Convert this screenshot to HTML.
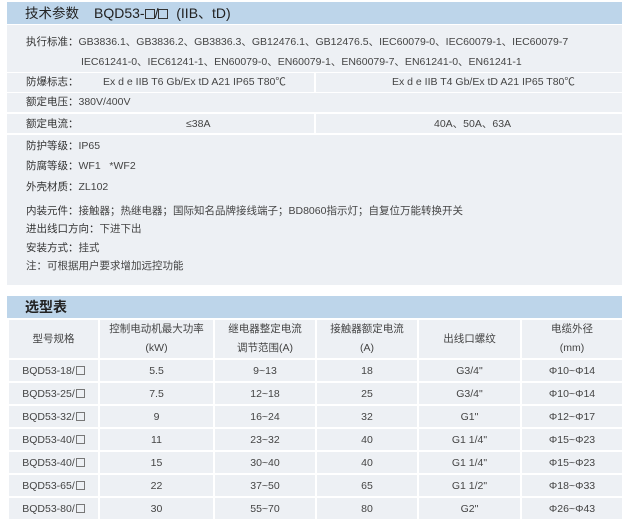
<!DOCTYPE html>
<html><head><meta charset="utf-8"><style>
*{margin:0;padding:0;box-sizing:border-box}
body{width:635px;height:523px;background:#fff;font-family:"Liberation Sans","Noto Sans CJK SC",sans-serif;color:#444;font-size:10.5px;position:relative;overflow:hidden}
.a{position:absolute}
.hd{background:#bdd5ea;left:7px;width:615px;color:#222;font-size:14px}
.g{background:#edf0f4;left:7px;width:615px}
.t{position:absolute;white-space:nowrap;line-height:14px}
.lb{color:#333}
.bx{display:inline-block;width:9px;height:9px;border:1px solid #777;vertical-align:-1px;margin-left:1px}
.hbx{display:inline-block;width:10px;height:10px;border:1px solid #333;vertical-align:-1px}
table{position:absolute;left:7px;top:318px;width:615px;border-collapse:collapse;table-layout:fixed}
td{background:#edf0f4;border:2px solid #fff;text-align:center;height:23px;padding:0;line-height:14px}
tr:first-child td{height:39px;line-height:19px}
</style></head><body>
<div class="a hd" style="top:2px;height:22px"><span class="t" style="left:18px;top:4px;line-height:15px;font-size:13.5px">技术参数</span><span class="t" style="left:87px;top:4px;line-height:15px">BQD53-<span class="hbx"></span>/<span class="hbx"></span>&nbsp;&nbsp;(IIB、tD)</span></div>
<div class="a g" style="top:25px;height:47px"></div>
<div class="a g" style="top:73px;height:19px;width:307px"></div>
<div class="a g" style="top:73px;height:19px;left:316px;width:306px"></div>
<div class="a g" style="top:93px;height:19px"></div>
<div class="a g" style="top:114px;height:19px;width:307px"></div>
<div class="a g" style="top:114px;height:19px;left:316px;width:306px"></div>
<div class="a g" style="top:135px;height:150px"></div>
<span class="t" style="left:26px;top:35px"><span class="lb">执行标准：</span>GB3836.1、GB3836.2、GB3836.3、GB12476.1、GB12476.5、IEC60079-0、IEC60079-1、IEC60079-7</span>
<span class="t" style="left:81px;top:55px">IEC61241-0、IEC61241-1、EN60079-0、EN60079-1、EN60079-7、EN61241-0、EN61241-1</span>
<span class="t lb" style="left:26px;top:75px">防爆标志：</span>
<span class="t" style="left:103px;top:75px">Ex d e IIB T6 Gb/Ex tD A21 IP65 T80℃</span>
<span class="t" style="left:392px;top:75px">Ex d e IIB T4 Gb/Ex tD A21 IP65 T80℃</span>
<span class="t" style="left:26px;top:95px"><span class="lb">额定电压：</span>380V/400V</span>
<span class="t lb" style="left:26px;top:117px">额定电流：</span>
<span class="t" style="left:186px;top:117px">≤38A</span>
<span class="t" style="left:434px;top:117px">40A、50A、63A</span>
<span class="t" style="left:26px;top:139px"><span class="lb">防护等级：</span>IP65</span>
<span class="t" style="left:26px;top:159px"><span class="lb">防腐等级：</span>WF1&nbsp;&nbsp;&nbsp;*WF2</span>
<span class="t" style="left:26px;top:180px"><span class="lb">外壳材质：</span>ZL102</span>
<span class="t" style="left:26px;top:204px"><span class="lb">内装元件：</span>接触器；热继电器；国际知名品牌接线端子；BD8060指示灯；自复位万能转换开关</span>
<span class="t" style="left:26px;top:222px"><span class="lb">进出线口方向：</span>下进下出</span>
<span class="t" style="left:26px;top:241px"><span class="lb">安装方式：</span>挂式</span>
<span class="t" style="left:26px;top:259px">注：可根据用户要求增加远控功能</span>
<div class="a hd" style="top:296px;height:22px"><span class="t" style="left:18px;top:4px;line-height:15px;font-weight:bold">选型表</span></div>
<table>
<colgroup><col style="width:91px"><col style="width:115px"><col style="width:102px"><col style="width:102px"><col style="width:103px"><col style="width:102px"></colgroup>
<tr><td>型号规格</td><td>控制电动机最大功率<br>(kW)</td><td>继电器整定电流<br>调节范围(A)</td><td>接触器额定电流<br>(A)</td><td>出线口螺纹</td><td>电缆外径<br>(mm)</td></tr>
<tr><td>BQD53-18/<span class="bx"></span></td><td>5.5</td><td>9~13</td><td>18</td><td>G3/4"</td><td>Φ10~Φ14</td></tr>
<tr><td>BQD53-25/<span class="bx"></span></td><td>7.5</td><td>12~18</td><td>25</td><td>G3/4"</td><td>Φ10~Φ14</td></tr>
<tr><td>BQD53-32/<span class="bx"></span></td><td>9</td><td>16~24</td><td>32</td><td>G1"</td><td>Φ12~Φ17</td></tr>
<tr><td>BQD53-40/<span class="bx"></span></td><td>11</td><td>23~32</td><td>40</td><td>G1 1/4"</td><td>Φ15~Φ23</td></tr>
<tr><td>BQD53-40/<span class="bx"></span></td><td>15</td><td>30~40</td><td>40</td><td>G1 1/4"</td><td>Φ15~Φ23</td></tr>
<tr><td>BQD53-65/<span class="bx"></span></td><td>22</td><td>37~50</td><td>65</td><td>G1 1/2"</td><td>Φ18~Φ33</td></tr>
<tr><td>BQD53-80/<span class="bx"></span></td><td>30</td><td>55~70</td><td>80</td><td>G2"</td><td>Φ26~Φ43</td></tr>
</table>
</body></html>
